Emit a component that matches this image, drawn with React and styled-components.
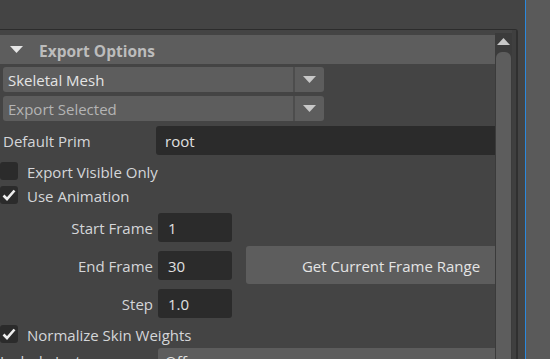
import React from "react";
import styled, { createGlobalStyle } from "styled-components";

const GlobalStyle = createGlobalStyle`
  html, body {
    margin: 0;
    padding: 0;
    background: #444444;
    overflow: hidden;
  }
  body {
    font-family: "Open Sans", "Noto Sans", sans-serif;
    font-size: 15px;
    color: #d4d6d9;
  }
`;

const Screen = styled.div`
  display: flex;
  width: 550px;
  height: 359px;
  overflow: hidden;
`;

const Main = styled.div`
  flex: 0 0 525px;
  display: flex;
  flex-direction: column;
  background: #444444;
`;

const TopStrip = styled.div`
  height: 29px;
  flex: 0 0 29px;
`;

const Frame = styled.div`
  flex: 1;
  display: flex;
  width: 516px;
  border-top: 1px solid #2c2c2c;
  border-right: 2px solid #303030;
  border-top-right-radius: 3px;
  min-height: 0;
`;

const Content = styled.div`
  width: 495px;
  flex: 0 0 495px;
  overflow: hidden;
  display: flex;
  flex-direction: column;
  padding-top: 5px;
`;

const Scrollbar = styled.div`
  flex: 0 0 17px;
  background: #3b3b3b;
  display: flex;
  flex-direction: column;
  align-items: center;
  padding-top: 5px;
  margin-top: 3px;
`;

const ScrollThumb = styled.div`
  margin-top: 7px;
  width: 15px;
  flex: 1;
  background: #5d5d5d;
  border-radius: 6px 6px 0 0;
`;

const Gutter = styled.div`
  flex: 0 0 4px;
  background: #3f3f3f;
`;

const BlueLine = styled.div`
  flex: 0 0 1px;
  background: #2b88dc;
`;

const SidePanel = styled.div`
  flex: 1;
  background: #5a5a5a;
`;

const Header = styled.div`
  height: 29px;
  flex: 0 0 29px;
  background: #5d5d5d;
  display: flex;
  align-items: center;
  padding-left: 10px;
`;

const HeaderTitle = styled.span`
  margin-left: 16px;
  padding-top: 2px;
  font-weight: 700;
  font-size: 15.5px;
  color: #bcbcbc;
`;

const Dropdown = styled.div`
  display: flex;
  height: 25px;
  flex: 0 0 25px;
  width: 321px;
  margin: ${(p) => p.$top}px 0 0 3px;
`;

const DropdownValue = styled.div`
  flex: 1;
  background: #5d5d5d;
  border-radius: 3px 0 0 3px;
  display: flex;
  align-items: center;
  padding: 1px 0 0 5px;
  color: ${(p) => (p.$dim ? "#b4b4b4" : "#e4e4e4")};
`;

const DropdownSplit = styled.div`
  flex: 0 0 2px;
  background: #4d4d4d;
`;

const DropdownButton = styled.div`
  flex: 0 0 29px;
  background: #5d5d5d;
  border-radius: 0 3px 3px 0;
  display: flex;
  align-items: center;
  justify-content: center;
`;

const PrimRow = styled.div`
  display: flex;
  align-items: center;
  height: 29px;
  flex: 0 0 29px;
  margin-top: 5px;
`;

const PrimLabel = styled.div`
  flex: 0 0 153px;
  padding: 1px 0 0 3px;
`;

const TextField = styled.div`
  flex: 1;
  height: 29px;
  background: #2b2b2b;
  border-radius: 3px 0 0 3px;
  display: flex;
  align-items: center;
  padding: 1px 0 0 9px;
  box-sizing: border-box;
  color: #e0e0e0;
`;

const CheckRow = styled.div`
  display: flex;
  align-items: center;
  height: 24px;
  flex: 0 0 24px;
  margin-top: ${(p) => p.$top || 0}px;
`;

const CheckBox = styled.div`
  width: 18px;
  height: 18px;
  flex: 0 0 18px;
  background: #2b2b2b;
  border-radius: 3px;
  display: flex;
  align-items: center;
  justify-content: center;
`;

const CheckLabel = styled.span`
  margin-left: 9px;
  padding-top: 1px;
`;

const NumberRow = styled.div`
  display: flex;
  align-items: center;
  height: 38px;
  flex: 0 0 38px;
  margin-top: ${(p) => p.$top || 0}px;
`;

const RightLabel = styled.div`
  flex: 0 0 153px;
  text-align: right;
  white-space: nowrap;
  padding-top: 1px;
`;

const NumberField = styled.div`
  flex: 0 0 74px;
  margin-left: 5px;
  height: 29px;
  background: #2b2b2b;
  border-radius: 3px;
  display: flex;
  align-items: center;
  padding: 1px 0 0 10px;
  box-sizing: border-box;
  color: #e0e0e0;
`;

const RangeButton = styled.div`
  flex: 0 0 290px;
  margin-left: 14px;
  height: 38px;
  background: #5d5d5d;
  border-radius: 3px;
  display: flex;
  align-items: center;
  justify-content: center;
  padding-top: 1px;
  box-sizing: border-box;
  color: #e4e4e4;
`;

const OptionRow = styled.div`
  display: flex;
  align-items: flex-start;
  margin-top: 2px;
  height: 30px;
  flex: 0 0 30px;
`;

const OptionLabel = styled.div`
  flex: 0 0 153px;
  padding-top: 3px;
  white-space: nowrap;
`;

const OptionValue = styled.div`
  flex: 1;
  margin-left: 5px;
  height: 29px;
  background: #5d5d5d;
  border-radius: 3px 0 0 3px;
  padding: 3px 0 0 7px;
  color: #e0e0e0;
`;

const Triangle = ({ up, color = "#c8c8c8" }) => (
  <svg width="13" height="7" viewBox="0 0 13 7">
    <polygon points={up ? "0,7 13,7 6.5,0" : "0,0 13,0 6.5,7"} fill={color} />
  </svg>
);

const Check = () => (
  <svg width="14" height="12" viewBox="0 0 14 12">
    <polyline
      points="1.5,6.5 5,10 12.5,1.5"
      fill="none"
      stroke="#eeeeee"
      strokeWidth="2.6"
    />
  </svg>
);

const Select = ({ value, dim, top }) => (
  <Dropdown $top={top}>
    <DropdownValue $dim={dim}>{value}</DropdownValue>
    <DropdownSplit />
    <DropdownButton>
      <Triangle />
    </DropdownButton>
  </Dropdown>
);

const Option = ({ label, checked, top }) => (
  <CheckRow $top={top}>
    <CheckBox>{checked && <Check />}</CheckBox>
    <CheckLabel>{label}</CheckLabel>
  </CheckRow>
);

export default function App() {
  return (
    <>
      <GlobalStyle />
      <Screen>
        <Main>
          <TopStrip />
          <Frame>
            <Content>
              <Header>
                <Triangle color="#e6e6e6" />
                <HeaderTitle>Export Options</HeaderTitle>
              </Header>
              <Select value="Skeletal Mesh" top={3} />
              <Select value="Export Selected" dim top={4} />
              <PrimRow>
                <PrimLabel>Default Prim</PrimLabel>
                <TextField>root</TextField>
              </PrimRow>
              <Option label="Export Visible Only" top={4} />
              <Option label="Use Animation" checked />
              <NumberRow $top={1}>
                <RightLabel>Start Frame</RightLabel>
                <NumberField>1</NumberField>
              </NumberRow>
              <NumberRow>
                <RightLabel>End Frame</RightLabel>
                <NumberField>30</NumberField>
                <RangeButton>Get Current Frame Range</RangeButton>
              </NumberRow>
              <NumberRow>
                <RightLabel>Step</RightLabel>
                <NumberField>1.0</NumberField>
              </NumberRow>
              <Option label="Normalize Skin Weights" checked />
              <OptionRow>
                <OptionLabel>Include Instances</OptionLabel>
                <OptionValue>Off</OptionValue>
              </OptionRow>
            </Content>
            <Scrollbar>
              <Triangle up />
              <ScrollThumb />
            </Scrollbar>
            <Gutter />
          </Frame>
        </Main>
        <BlueLine />
        <SidePanel />
      </Screen>
    </>
  );
}
